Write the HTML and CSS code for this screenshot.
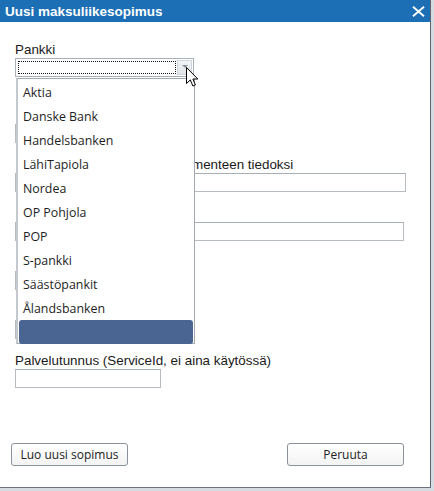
FILE: index.html
```html
<!DOCTYPE html>
<html lang="fi">
<head>
<meta charset="utf-8">
<title>Uusi maksuliikesopimus</title>
<link rel="stylesheet" href="styles.css">
</head>
<body>
<div class="dialog">
  <div class="titlebar">
    <span class="title">Uusi maksuliikesopimus</span>
    <svg class="close" width="13" height="11" viewBox="0 0 13 11" aria-label="Sulje">
      <path d="M1 0.8 L12 10.2 M12 0.8 L1 10.2" stroke="#fff" stroke-width="1.9" fill="none"/>
    </svg>
  </div>
  <div class="content">
    <div class="group first">
      <label class="lbl">Pankki</label>
      <div class="select">
        <div class="focusbox"></div>
        <div class="arrowbtn"><span class="tri"></span></div>
      </div>
    </div>
    <div class="group">
      <span class="lbl"></span>
      <div class="input w-short"></div>
    </div>
    <div class="group">
      <label class="lbl lbl-under">menteen tiedoksi</label>
      <div class="input w-long"></div>
    </div>
    <div class="group">
      <span class="lbl"></span>
      <div class="input w-long2"></div>
    </div>
    <div class="group">
      <span class="lbl"></span>
      <div class="input w-short"></div>
    </div>
    <div class="group">
      <span class="lbl"></span>
      <div class="input w-short"></div>
    </div>
    <div class="group">
      <label class="lbl">Palvelutunnus (ServiceId, ei aina käytössä)</label>
      <div class="input w-service"></div>
    </div>
  </div>
  <div class="buttons">
    <button class="btn">Luo uusi sopimus</button>
    <button class="btn">Peruuta</button>
  </div>

  <ul class="dropdown">
    <li>Aktia</li>
    <li>Danske Bank</li>
    <li>Handelsbanken</li>
    <li>LähiTapiola</li>
    <li>Nordea</li>
    <li>OP Pohjola</li>
    <li>POP</li>
    <li>S-pankki</li>
    <li>Säästöpankit</li>
    <li>Ålandsbanken</li>
    <li class="selected">&nbsp;</li>
  </ul>

  <svg class="cursor" width="13" height="20" viewBox="0 0 13 20">
    <path d="M0.5 0.5 L0.5 16.5 L4.3 12.9 L6.9 19 L9.4 18 L6.9 12 L11.8 12 Z" fill="#fff" stroke="#000" stroke-width="1" stroke-linejoin="miter"/>
  </svg>
</div>
</body>
</html>
```
FILE: styles.css
```css
* { box-sizing: border-box; }
html, body { margin: 0; padding: 0; }
body {
  background: #d6dbe2;
  width: 434px;
  height: 491px;
  overflow: hidden;
  font-family: "Liberation Sans", Arial, sans-serif;
}
.dialog {
  position: relative;
  width: 431px;
  height: 488px;
  background: #fff;
  border-right: 1px solid #5d6673;
  border-bottom: 1px solid #6b727c;
}
.titlebar {
  height: 22px;
  background: #1c6fb5;
  color: #fff;
  display: flex;
  align-items: center;
  justify-content: space-between;
  padding: 2px 5px 0 5px;
}
.title {
  font-family: "Liberation Sans", Arial, sans-serif;
  font-weight: bold;
  font-size: 13.5px;
  line-height: 16px;
}
.close { margin-top: -1px; }
.content {
  padding: 20px 0 0 15px;
}
.group { margin-bottom: 14px; }
.group.first { margin-bottom: 31px; }
.lbl {
  display: block;
  font-size: 13.4px;
  line-height: 15px;
  height: 15px;
  margin-bottom: 1px;
  color: #1a1a1a;
  white-space: nowrap;
}
.lbl-under { padding-left: 177px; }
.input {
  height: 19px;
  border: 1px solid #b7bcc3;
  border-top-color: #a9afb7;
  background: #fff;
}
.w-short { width: 160px; }
.w-long { width: 391px; }
.w-long2 { width: 389px; }
.w-service { width: 146px; }
.select {
  position: relative;
  width: 179px;
  height: 19px;
  border: 1px solid #a9b0b8;
  background: #fff;
  display: flex;
  padding: 2px 1px 2px 2px;
}
.focusbox {
  flex: 1;
  border: 1px dotted #111;
}
.arrowbtn {
  width: 15px;
  margin-left: 1px;
  margin-top: -1px;
  margin-bottom: -1px;
  background: linear-gradient(#f2f4f6, #dfe3e7);
  border: 1px solid #d0d5da;
  display: flex;
  justify-content: center;
  padding-top: 4px;
}
.tri {
  width: 0;
  height: 0;
  border-left: 3px solid transparent;
  border-right: 3px solid transparent;
  border-top: 3px solid #8a9097;
}
.buttons {
  display: flex;
  justify-content: space-between;
  padding: 0 26px 0 11px;
  margin-top: 55px;
}
.btn {
  width: 117px;
  height: 23px;
  font-family: "Open Sans", "Noto Sans", sans-serif;
  font-size: 12px;
  color: #222;
  background: linear-gradient(#ffffff, #f3f3f3);
  border: 1px solid #8c9299;
  border-radius: 3px;
  padding: 0;
  line-height: 20px;
}
.dropdown {
  position: absolute;
  left: 16px;
  top: 78px;
  width: 179px;
  height: 266px;
  margin: 0;
  padding: 2px 1px 0 1px;
  list-style: none;
  background: #fff;
  border: 1px solid #a2a9b2;
  border-left: 2px solid #c4c9cf;
  font-family: "Open Sans", "Noto Sans", sans-serif;
  font-size: 12.4px;
  color: #1e1e1e;
}
.dropdown li {
  height: 24px;
  line-height: 24px;
  padding-left: 4px;
}
.dropdown li.selected {
  height: 24px;
  margin-top: -1px;
  background: #4a6591;
  border-radius: 3px;
}
.cursor {
  position: absolute;
  left: 186px;
  top: 67px;
}
```
